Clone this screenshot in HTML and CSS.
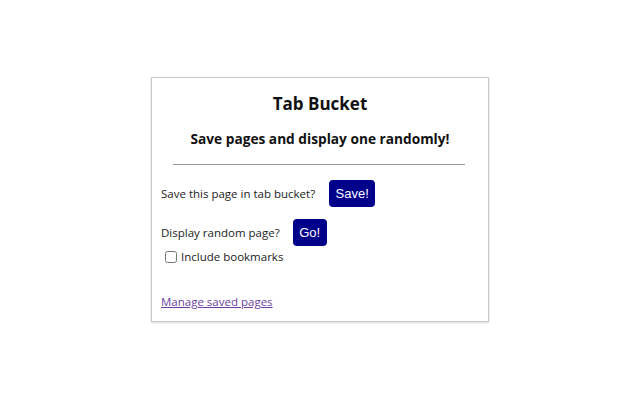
FILE: index.html
```html
<!DOCTYPE html>
<html lang="en">
<head>
    <meta charset="UTF-8">
    <title>Tab Bucket</title>
    <link rel="stylesheet" href="styles.css">
</head>
<body>
    <div class="popup">
        <h1 class="title">Tab Bucket</h1>
        <h2 class="subtitle">Save pages and display one randomly!</h2>
        <hr class="divider">

        <div class="row row-save">
            <span class="label">Save this page in tab bucket?</span>
            <button class="btn" id="save">Save!</button>
        </div>

        <div class="row row-go">
            <span class="label">Display random page?</span>
            <button class="btn" id="go">Go!</button>
        </div>
        <label class="check">
            <input type="checkbox" id="bookmarks">
            <span>Include bookmarks</span>
        </label>

        <a class="manage" href="#">Manage saved pages</a>
    </div>
</body>
</html>
```

FILE: styles.css
```css
*{
    margin: 0;
    padding: 0;
    box-sizing: border-box;
}
body{
    width: 640px;
    height: 400px;
    background: #fff;
    font-family: "Open Sans", "Noto Sans", sans-serif;
    color: #222;
    padding-top: 77px;
    padding-left: 151px;
}
/*弹出框*/
.popup{
    width: 338px;
    height: 245px;
    border: 1px solid #c8c8c8;
    box-shadow: 0 1px 2px rgba(0,0,0,0.15);
    padding: 0 9px;
    display: flex;
    flex-direction: column;
}
.title{
    font-size: 17px;
    font-weight: bold;
    color: #111;
    text-align: center;
    margin-top: 14px;
    line-height: 24px;
}
.subtitle{
    font-size: 13.7px;
    font-weight: bold;
    color: #111;
    text-align: center;
    margin-top: 14px;
    line-height: 18px;
}
.divider{
    border: none;
    border-top: 1px solid #999;
    width: 292px;
    margin: 16px auto 0 12px;
}
/*按钮行*/
.row{
    display: flex;
    align-items: center;
    font-size: 11.5px;
}
.row-save{
    margin-top: 15px;
}
.row-save .btn{
    margin-left: 14px;
    width: 46px;
}
.row-go{
    margin-top: 12px;
}
.row-go .btn{
    margin-left: 13px;
    width: 34px;
}
.btn{
    height: 27px;
    background: #00008b;
    color: #fff;
    border: none;
    border-radius: 4px;
    font-family: "Liberation Sans", Arial, sans-serif;
    font-size: 13px;
    outline: none;
}
/*复选框*/
.check{
    display: flex;
    align-items: center;
    font-size: 11.5px;
    margin-top: 3px;
    margin-left: 4px;
}
.check input{
    width: 12px;
    height: 12px;
    margin: 0 4px 0 0;
}
.manage{
    align-self: flex-start;
    margin-top: 30px;
    font-size: 11.5px;
    color: #6b3fa0;
    text-decoration: underline;
}
```
